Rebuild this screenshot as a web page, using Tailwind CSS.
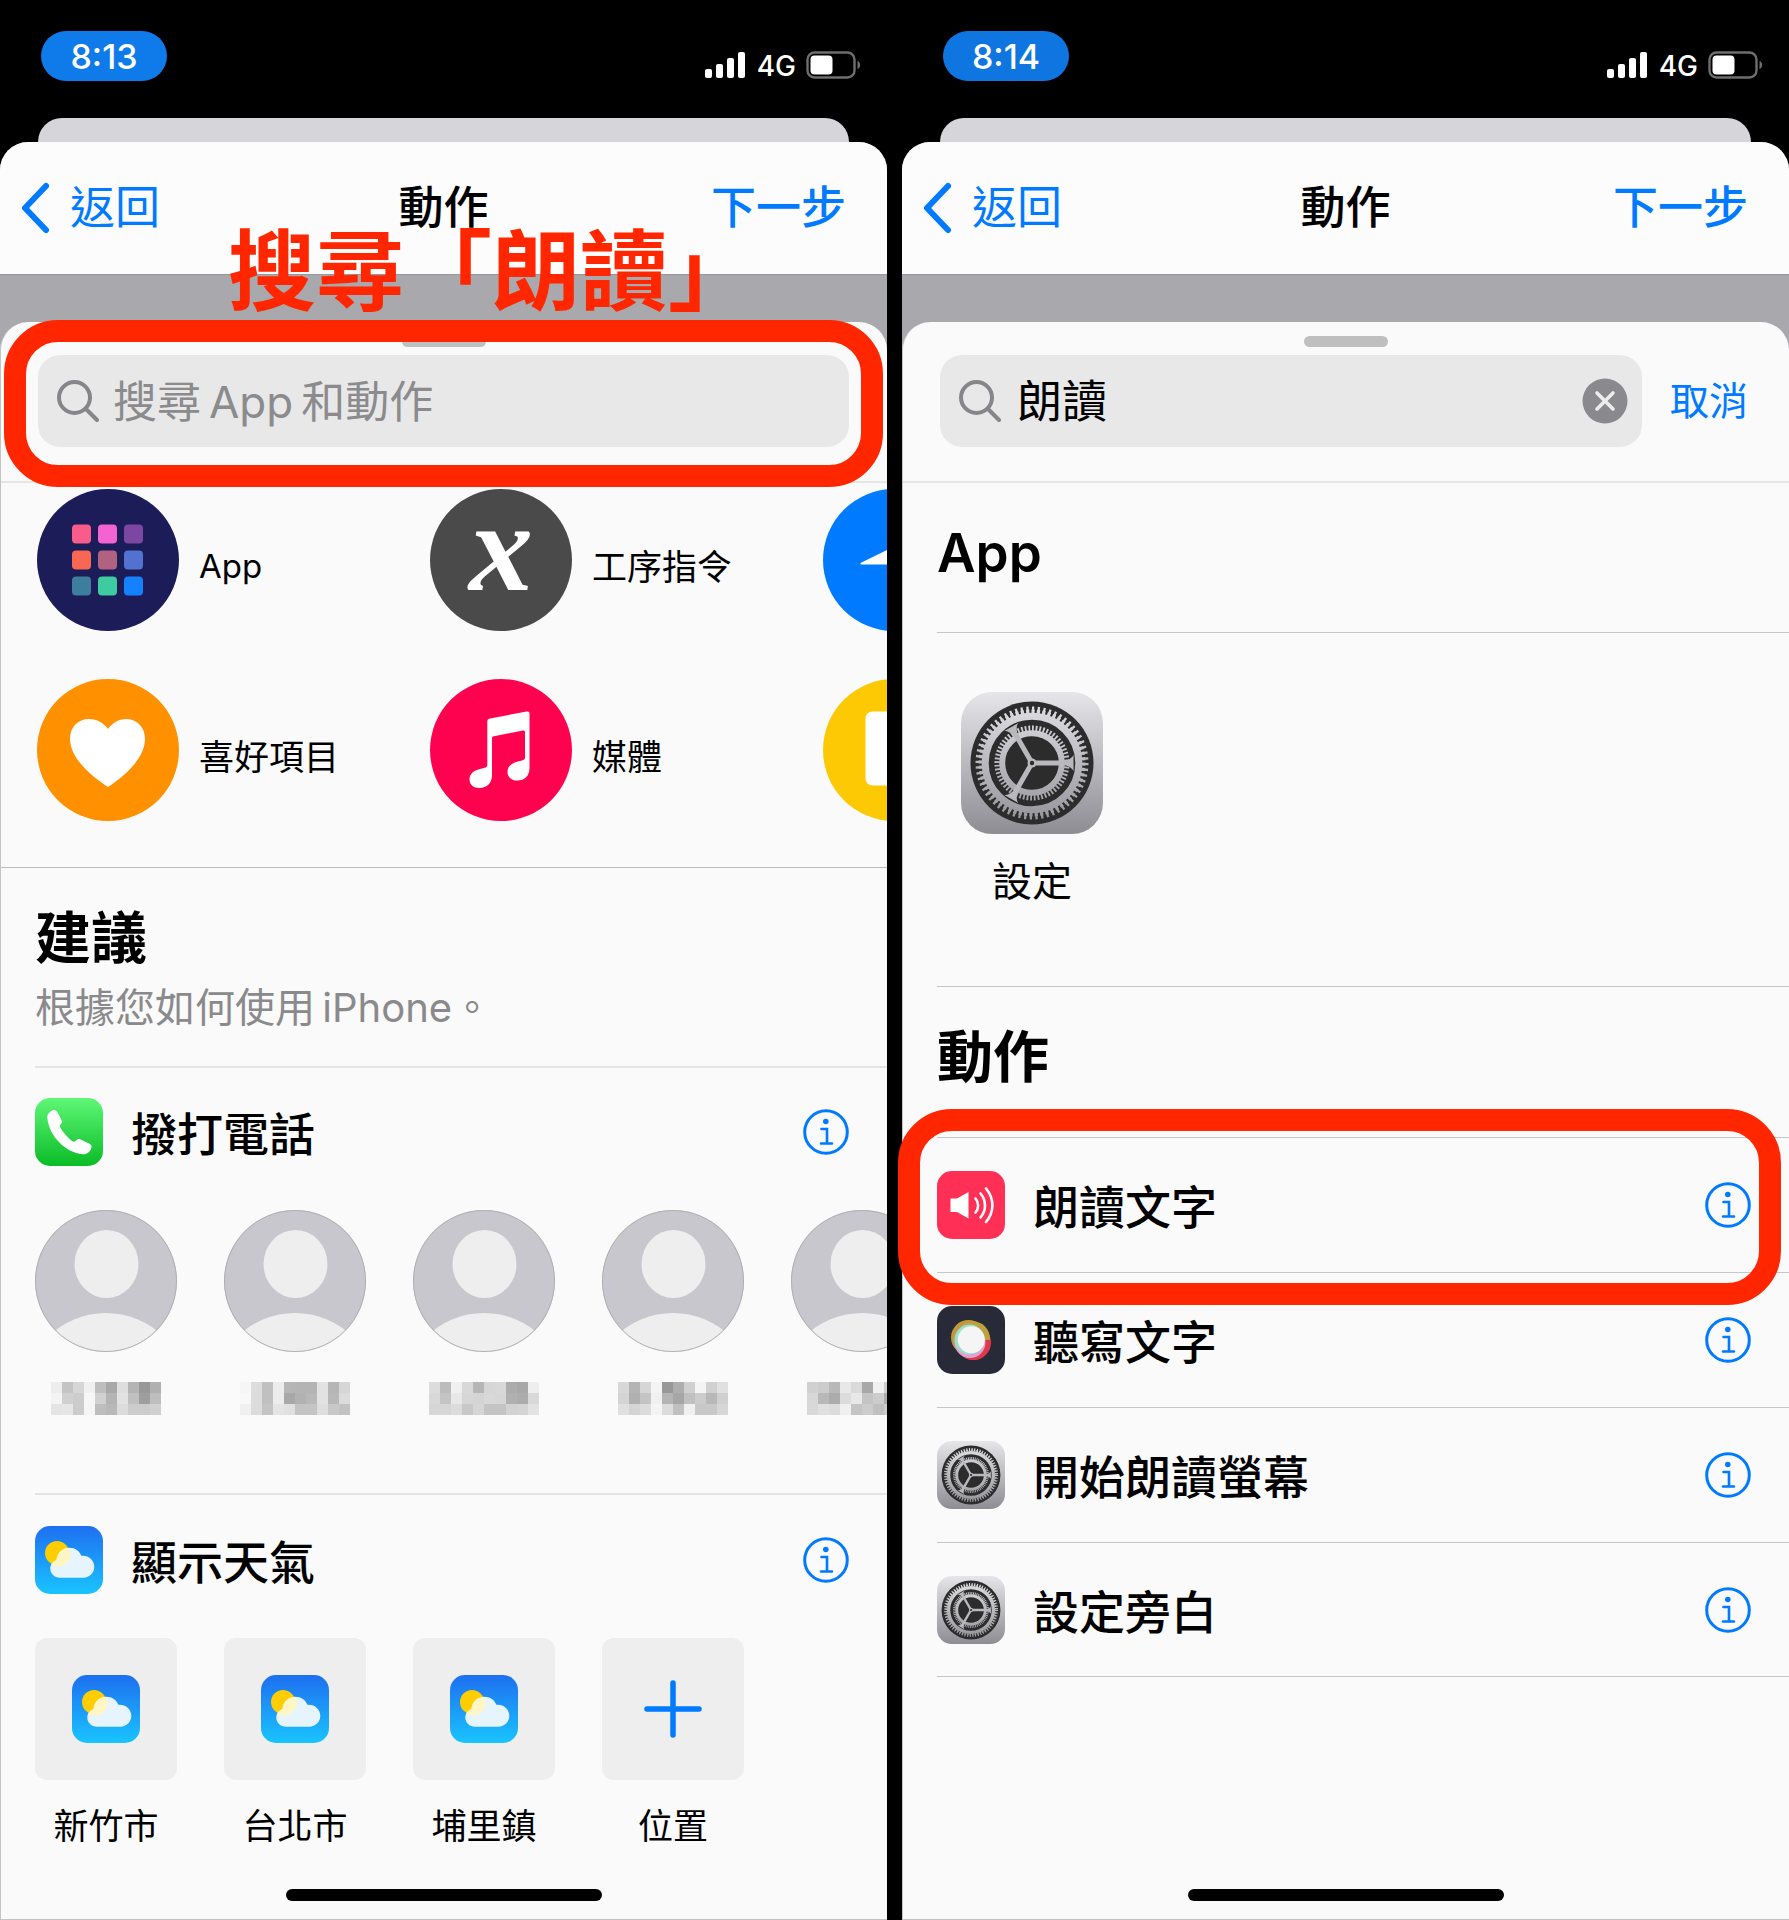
<!DOCTYPE html>
<html lang="zh-Hant">
<head>
    <meta charset="UTF-8">
    <meta name="viewport" content="width=device-width, initial-scale=1.0">
    <title>動作</title>
    <script src="https://cdn.jsdelivr.net/npm/@tailwindcss/browser@4"></script>
</head>
<body class="bg-black text-black font-['Inter','Noto_Sans_CJK_TC',sans-serif]">

    <!-- Icon sprite -->
    <svg class="absolute w-0 h-0" aria-hidden="true">
        <defs>
            <linearGradient id="steel" gradientUnits="userSpaceOnUse" x1="0" y1="0" x2="0" y2="142">
                <stop offset="0" stop-color="#e6e5ea"/>
                <stop offset="1" stop-color="#8e8d93"/>
            </linearGradient>
            <linearGradient id="green" x1="0" y1="0" x2="0" y2="1">
                <stop offset="0" stop-color="#5ff777"/>
                <stop offset="1" stop-color="#0abc26"/>
            </linearGradient>
            <linearGradient id="sky" x1="0" y1="0" x2="0" y2="1">
                <stop offset="0" stop-color="#1e6ff0"/>
                <stop offset="1" stop-color="#19c4ff"/>
            </linearGradient>
            <clipPath id="round"><circle cx="71" cy="71" r="71"/></clipPath>
            <clipPath id="sunClip"><circle cx="23" cy="28" r="12.500"/></clipPath>
        </defs>

        <symbol id="i-back" viewBox="0 0 30 52">
            <path d="M26 4 5 26l21 22" fill="none" stroke="#007aff" stroke-width="6" stroke-linecap="round" stroke-linejoin="round"/>
        </symbol>
        <symbol id="i-signal" viewBox="0 0 42 28">
            <g fill="#fff">
                <rect x="0" y="18" width="7" height="9" rx="2"/>
                <rect x="11" y="13" width="7" height="14" rx="2"/>
                <rect x="22" y="7" width="7" height="20" rx="2"/>
                <rect x="33" y="1" width="7" height="26" rx="2"/>
            </g>
        </symbol>
        <symbol id="i-battery" viewBox="0 0 55 28">
            <rect x="1.500" y="1.500" width="47" height="25" rx="7" fill="none" stroke="#6e6e6e" stroke-width="2.400"/>
            <rect x="4.500" y="4.500" width="22" height="19" rx="4" fill="#fff"/>
            <path d="M51.500 10c3.500 1 3.500 7 0 8z" fill="#6e6e6e"/>
        </symbol>
        <symbol id="i-search" viewBox="0 0 42 42">
            <g fill="none" stroke="#85858a" stroke-width="4" stroke-linecap="round">
                <circle cx="17.500" cy="17.500" r="15.500"/>
                <path d="m29 29 11 11"/>
            </g>
        </symbol>
        <symbol id="i-clear" viewBox="0 0 46 46">
            <circle cx="23" cy="23" r="22.500" fill="#8a8a8e"/>
            <path d="m15 15 16 16M31 15 15 31" stroke="#ececec" stroke-width="3.600" stroke-linecap="round"/>
        </symbol>
        <symbol id="i-info" viewBox="0 0 46 46">
            <circle cx="23" cy="23" r="21.300" fill="none" stroke="#007aff" stroke-width="3"/>
            <circle cx="22.800" cy="12.500" r="2.800" fill="#007aff"/>
            <path d="M18.500 20H24v14M18 34.500h11" fill="none" stroke="#007aff" stroke-width="2.600" stroke-linecap="round"/>
        </symbol>

        <symbol id="i-apps" viewBox="0 0 142 142">
            <circle cx="71" cy="71" r="71" fill="#1c1c58"/>
            <g>
                <rect x="35" y="35.500" width="19" height="19" rx="4" fill="#f75c8a"/>
                <rect x="61" y="35.500" width="19" height="19" rx="4" fill="#f364d2"/>
                <rect x="87" y="35.500" width="19" height="19" rx="4" fill="#7c47a2"/>
                <rect x="35" y="61.500" width="19" height="19" rx="4" fill="#f86654"/>
                <rect x="61" y="61.500" width="19" height="19" rx="4" fill="#b06280"/>
                <rect x="87" y="61.500" width="19" height="19" rx="4" fill="#5172d0"/>
                <rect x="35" y="87.500" width="19" height="19" rx="4" fill="#3d7d9e"/>
                <rect x="61" y="87.500" width="19" height="19" rx="4" fill="#3ecb9f"/>
                <rect x="87" y="87.500" width="19" height="19" rx="4" fill="#1482ff"/>
            </g>
        </symbol>
        <symbol id="i-heart" viewBox="0 0 142 142">
            <circle cx="71" cy="71" r="71" fill="#ff9000"/>
            <path d="M71 108C56 98 33 80 33 60c0-12 8-20 19-20 8 0 15 4 19 10 4-6 11-10 18-10 11 0 19 8 19 20 0 20-22 38-37 48z" fill="#fff"/>
        </symbol>
        <symbol id="i-music" viewBox="0 0 142 142">
            <circle cx="71" cy="71" r="71" fill="#ff024f"/>
            <path d="M57.300 43c0-2 .7-3 2.700-3.400L96.500 32.500c2-.4 3 .3 3 2V89c0 8-5 12.500-12 12.500-6 0-10-3.500-10-8.500 0-5.500 4-9 10.500-10.500 5-1.200 7-1.500 7-4V53.500c0-1.500-.7-2.200-2.200-1.900L64 57.200c-1.600.3-2 1-2 2.500V96c0 8-5 13-12.500 13-6 0-10-3.500-10-8.500 0-5.500 4-9 10.500-10.500 5.300-1.100 7.300-1.700 7.300-4z" fill="#fff"/>
        </symbol>
        <symbol id="i-location" viewBox="0 0 142 142">
            <circle cx="71" cy="71" r="71" fill="#007aff"/>
            <path d="M38.500 73.500 103 42c2-1 3 0 2 2L76 106c-1 2-3 2-3-.5V77c0-1-.5-1.500-1.500-1.500H38.500c-1.500 0-1.500-1.300 0-2z" fill="#fff"/>
        </symbol>
        <symbol id="i-doc" viewBox="0 0 142 142">
            <circle cx="71" cy="71" r="71" fill="#fdc804"/>
            <rect x="42.500" y="32.500" width="57" height="74" rx="7" fill="#fff"/>
        </symbol>
        <symbol id="i-person" viewBox="0 0 142 142">
            <circle cx="71" cy="71" r="71" fill="#c8c7cd"/>
            <ellipse cx="71.500" cy="54" rx="32" ry="34" fill="#eee"/>
            <circle cx="71" cy="185" r="82" fill="#eee" clip-path="url(#round)"/>
            <circle cx="71" cy="71" r="70.500" fill="none" stroke="#b1b1b4" stroke-width="1"/>
        </symbol>

        <symbol id="i-phone" viewBox="0 0 68 68">
            <rect width="68" height="68" rx="15" fill="url(#green)"/>
            <path d="M12.500 21c-1-4.500 2-7.300 5.500-8.700 2-.7 3.500.2 4.500 2.200l4 7.500c1 2 .5 3-1 4.500s-.5 3 1 5c3 4.500 6.500 8.500 10.500 11.500 2 1.300 3.300.5 4.500-1 1.200-1 2.300-1.200 4-.5l9 4.300c2 1 2.500 2.200 1.800 4.200-1.300 4-4.300 6.500-8.300 6.300C30 54.500 14.500 38 12.500 21z" fill="#fff"/>
        </symbol>
        <symbol id="i-weather" viewBox="0 0 68 68">
            <rect width="68" height="68" rx="15" fill="url(#sky)"/>
            <circle cx="22" cy="27" r="12" fill="#ffcd00"/>
            <path d="M25 51.700c-5.500 0-9.700-4-9.700-9.200 0-4 2.500-7 6.200-8.500C22 27 27.500 21.700 34.500 21.700c5.500 0 10 3 11.800 8C53.500 29 59.300 34 59.300 40.800c0 6.200-4.800 10.900-11 10.900z" fill="#e6f4fe"/>
            <path d="M25 51.700c-5.500 0-9.700-4-9.700-9.200 0-4 2.500-7 6.200-8.500C22 27 27.500 21.700 34.500 21.700c5.500 0 10 3 11.800 8C53.500 29 59.300 34 59.300 40.800c0 6.200-4.800 10.900-11 10.900z" fill="#fff6c4" clip-path="url(#sunClip)"/>
        </symbol>
        <symbol id="i-speak" viewBox="0 0 68 68">
            <rect width="68" height="68" rx="15" fill="#ff2f55"/>
            <path d="M13.500 27.500H20L31.500 21v26.500L20 41h-6.500z" fill="#fff"/>
            <g fill="none" stroke="#fff" stroke-width="2.600" stroke-linecap="round">
                <path d="M38.500 27.500c3.500 4 3.500 10 0 14"/>
                <path d="M43.500 22.500c6 7 6 17 0 24"/>
                <path d="M49 17.500c8.500 10 8.500 23.500 0 33.500"/>
            </g>
        </symbol>
        <symbol id="i-dictate" viewBox="0 0 68 68">
            <rect width="68" height="68" rx="15" fill="#292a37"/>
            <circle cx="36.500" cy="36.500" r="17.500" fill="#e0384b"/>
            <circle cx="31.500" cy="31.500" r="17.500" fill="#c2963c"/>
            <circle cx="36" cy="32.500" r="17" fill="#bfa03f"/>
            <path d="M53.500 34c1 10-6.500 20-17 20-6 0-11-3-14-7.500L40 34z" fill="#e0384b"/>
            <circle cx="33" cy="36.500" r="15.500" fill="#e0a2d4"/>
            <circle cx="32.500" cy="33.500" r="15" fill="#9be0cc"/>
            <circle cx="34.300" cy="33.800" r="13.500" fill="#f5f5f5"/>
        </symbol>
        <symbol id="i-gear" viewBox="0 0 142 142">
            <rect width="142" height="142" rx="31" fill="url(#steel)"/>
            <circle cx="71" cy="71" r="61.500" fill="#2c2c2d"/>
            <g fill="none" stroke="url(#steel)">
                <circle cx="71" cy="71" r="53.500" stroke-width="6" stroke-dasharray=".8 1.200" pathLength="120"/>
                <circle cx="71" cy="71" r="51.500" stroke-width="4" stroke-dasharray="1.200 .8" stroke-dashoffset=".2" pathLength="120"/>
                <circle cx="71" cy="71" r="46.800" stroke-width="7"/>
                <circle cx="71" cy="71" r="34.800" stroke-width="5.500" stroke-dasharray="1 1" pathLength="120"/>
                <circle cx="71" cy="71" r="29.800" stroke-width="6"/>
            </g>
            <g fill="#b9b8bd">
                <path id="spoke" d="M71 68.500h34c3-1 6-2.500 7.500-5.500v16c-1.500-3-4.500-4.500-7.500-5.500H71z"/>
                <use href="#spoke" transform="rotate(120 71 71)"/>
                <use href="#spoke" transform="rotate(240 71 71)"/>
                <circle cx="71" cy="71" r="4.500"/>
            </g>
            <circle cx="71" cy="71" r="2.200" fill="#2c2c2d"/>
        </symbol>
        <symbol id="i-plus" viewBox="0 0 58 58">
            <path d="M29 3v52M3 29h52" stroke="#007aff" stroke-width="5.500" stroke-linecap="round"/>
        </symbol>
    </svg>

    <main class="grid grid-cols-2 gap-[15px] min-h-screen">

        <!-- Phone 1: action picker -->
        <section class="relative flex flex-col min-w-0">
            <header class="flex justify-between h-[118px] pl-[41px] pr-[26px]">
                <div class="flex items-center justify-center mt-[31px] w-[126px] h-[50px] pt-px rounded-full bg-[#0f7aea] text-white text-[34px] font-medium">8:13</div>
                <div class="flex items-center gap-2.5 mt-[51px] h-7 text-white text-[28px] font-medium">
                    <svg class="w-[42px] h-7"><use href="#i-signal"/></svg>
                    <span class="pt-0.5">4G</span>
                    <svg class="w-[55px] h-7"><use href="#i-battery"/></svg>
                </div>
            </header>
            <div class="mx-[38px] h-6 rounded-t-[24px] bg-[#d6d6da]"></div>

            <div class="flex-1 flex flex-col rounded-t-[28px] bg-[#a8a8ad]">
                <nav class="grid grid-cols-3 items-center h-[133px] px-[41px] rounded-t-[28px] border-b border-[#98989c] bg-[#fcfcfd] text-[45px] text-[#007aff]">
                    <button class="flex items-center gap-5 -ml-[21px] justify-self-start"><svg class="w-[30px] h-[52px]"><use href="#i-back"/></svg>返回</button>
                    <h1 class="text-center text-black font-medium">動作</h1>
                    <button class="justify-self-end font-medium">下一步</button>
                </nav>

                <div class="flex-1 flex flex-col mt-[47px] rounded-t-[28px] border-l border-b border-[#c4c4c6] bg-[#fafafa] overflow-hidden">
                    <div class="self-center mt-3.5 w-[84px] h-[11px] rounded-full bg-[#bfbfc0]"></div>
                    <div class="pl-[37px] pr-[38px] pt-2 pb-[34px] border-b-2 border-[#e6e6e6]">
                        <label class="flex items-center gap-3.5 h-[92px] px-[19px] rounded-[22px] bg-[#e8e8e8]">
                            <svg class="shrink-0 w-[42px] h-[42px]"><use href="#i-search"/></svg>
                            <input type="search" aria-label="搜尋" placeholder="搜尋&thinsp;App&thinsp;和動作" class="flex-1 min-w-0 pt-0.5 bg-transparent text-[44px] outline-none placeholder:text-[#8b8b8e]">
                        </label>
                    </div>

                    <!-- Categories -->
                    <div class="grid grid-cols-[repeat(3,393px)] gap-y-12 pt-1.5 pb-[46px] pl-9 border-b border-[#bcbcbe] text-[35px]">
                        <a href="#" class="flex items-center gap-5"><svg class="w-[142px] h-[142px]"><use href="#i-apps"/></svg><span class="pt-3.5 text-[33px]">App</span></a>
                        <a href="#" class="flex items-center gap-5"><span class="flex justify-center w-[142px] h-[142px] rounded-full bg-[#4a4a4a] text-white text-[128px] leading-[116px] font-bold italic font-['Liberation_Serif',serif]">x</span><span class="pt-3.5">工序指令</span></a>
                        <a href="#" aria-label="位置"><svg class="w-[142px] h-[142px]"><use href="#i-location"/></svg></a>
                        <a href="#" class="flex items-center gap-5"><svg class="w-[142px] h-[142px]"><use href="#i-heart"/></svg><span class="pt-3.5">喜好項目</span></a>
                        <a href="#" class="flex items-center gap-5"><svg class="w-[142px] h-[142px]"><use href="#i-music"/></svg><span class="pt-3.5">媒體</span></a>
                        <a href="#" aria-label="文件"><svg class="w-[142px] h-[142px]"><use href="#i-doc"/></svg></a>
                    </div>

                    <!-- Suggestions -->
                    <div class="pl-[34px]">
                        <h2 class="pt-[37px] text-[56px] leading-[66px] font-bold">建議</h2>
                        <p class="pt-[11px] pb-8 text-[40px] leading-[52px] text-[#8a8a8c]">根據您如何使用&thinsp;iPhone。</p>

                        <div class="border-t-2 border-[#e4e4e5] pt-[30px] pb-[78px]">
                            <div class="flex items-center gap-7 pr-[38px]">
                                <svg class="w-[68px] h-[68px]"><use href="#i-phone"/></svg>
                                <h3 class="flex-1 pt-1 text-[46px] leading-[64px] font-medium">撥打電話</h3>
                                <button aria-label="資訊"><svg class="w-[46px] h-[46px]"><use href="#i-info"/></svg></button>
                            </div>
                            <div id="contacts" class="grid grid-cols-[repeat(5,142px)] gap-[47px] pt-11"></div>
                        </div>

                        <div class="border-t-2 border-[#e4e4e5] pt-[31px]">
                            <div class="flex items-center gap-7 pr-[38px]">
                                <svg class="w-[68px] h-[68px]"><use href="#i-weather"/></svg>
                                <h3 class="flex-1 pt-1 text-[46px] leading-[64px] font-medium">顯示天氣</h3>
                                <button aria-label="資訊"><svg class="w-[46px] h-[46px]"><use href="#i-info"/></svg></button>
                            </div>
                            <div class="grid grid-cols-[repeat(4,142px)] gap-[47px] pt-11 text-[35px] leading-[44px] text-center">
                                <button><span class="flex items-center justify-center h-[142px] mb-6 rounded-xl bg-[#eee]"><svg class="w-[68px] h-[68px]"><use href="#i-weather"/></svg></span>新竹市</button>
                                <button><span class="flex items-center justify-center h-[142px] mb-6 rounded-xl bg-[#eee]"><svg class="w-[68px] h-[68px]"><use href="#i-weather"/></svg></span>台北市</button>
                                <button><span class="flex items-center justify-center h-[142px] mb-6 rounded-xl bg-[#eee]"><svg class="w-[68px] h-[68px]"><use href="#i-weather"/></svg></span>埔里鎮</button>
                                <button><span class="flex items-center justify-center h-[142px] mb-6 rounded-xl bg-[#eee]"><svg class="w-[58px] h-[58px]"><use href="#i-plus"/></svg></span>位置</button>
                            </div>
                        </div>
                    </div>

                    <div class="self-center mt-auto mb-[18px] w-[316px] h-3 rounded-full bg-black"></div>
                </div>
            </div>

            <!-- Annotation -->
            <p class="absolute left-[228px] top-[219px] text-[88px] leading-[104px] font-bold whitespace-nowrap text-[#ff2600]">搜尋「朗讀」</p>
            <div class="absolute inset-x-1 top-[320px] h-[167px] rounded-[54px] border-[22px] border-[#ff2600]"></div>
        </section>

        <!-- Phone 2: search results -->
        <section class="relative flex flex-col min-w-0">
            <header class="flex justify-between h-[118px] pl-[41px] pr-[26px]">
                <div class="flex items-center justify-center mt-[31px] w-[126px] h-[50px] pt-px rounded-full bg-[#0f75e0] text-white text-[34px] font-medium">8:14</div>
                <div class="flex items-center gap-2.5 mt-[51px] h-7 text-white text-[28px] font-medium">
                    <svg class="w-[42px] h-7"><use href="#i-signal"/></svg>
                    <span class="pt-0.5">4G</span>
                    <svg class="w-[55px] h-7"><use href="#i-battery"/></svg>
                </div>
            </header>
            <div class="mx-[38px] h-6 rounded-t-[24px] bg-[#d6d6da]"></div>

            <div class="flex-1 flex flex-col rounded-t-[28px] bg-[#a8a8ad]">
                <nav class="grid grid-cols-3 items-center h-[133px] px-[41px] rounded-t-[28px] border-b border-[#98989c] bg-[#fcfcfd] text-[45px] text-[#007aff]">
                    <button class="flex items-center gap-5 -ml-[21px] justify-self-start"><svg class="w-[30px] h-[52px]"><use href="#i-back"/></svg>返回</button>
                    <h1 class="text-center text-black font-medium">動作</h1>
                    <button class="justify-self-end font-medium">下一步</button>
                </nav>

                <div class="flex-1 flex flex-col mt-[47px] rounded-t-[28px] border-l border-b border-[#c4c4c6] bg-[#fafafa] overflow-hidden">
                    <div class="self-center mt-3.5 w-[84px] h-[11px] rounded-full bg-[#bfbfc0]"></div>
                    <div class="flex items-center gap-7 pl-[37px] pr-[41px] pt-2 pb-[34px] border-b-2 border-[#e6e6e6]">
                        <label class="flex-1 min-w-0 flex items-center gap-4 h-[92px] pl-[19px] pr-3.5 rounded-[22px] bg-[#e8e8e8]">
                            <svg class="shrink-0 w-[42px] h-[42px]"><use href="#i-search"/></svg>
                            <input type="text" aria-label="搜尋" value="朗讀" class="flex-1 min-w-0 pt-0.5 bg-transparent text-[45px] outline-none">
                            <button class="shrink-0" aria-label="清除"><svg class="w-[46px] h-[46px]"><use href="#i-clear"/></svg></button>
                        </label>
                        <button class="shrink-0 whitespace-nowrap text-[39px] text-[#007aff]">取消</button>
                    </div>

                    <div class="pl-[34px]">
                        <h2 class="pt-[37px] pb-[46px] text-[53px] leading-[66px] font-semibold">App</h2>
                        <div class="border-y border-[#c6c6c8] pt-[59px] pb-20 pl-6">
                            <button class="block w-[142px] text-center text-[40px] leading-[48px]">
                                <svg class="w-[142px] h-[142px] mb-6"><use href="#i-gear"/></svg>設定
                            </button>
                        </div>

                        <h2 class="pt-[37px] pb-[47px] text-[56px] leading-[66px] font-bold">動作</h2>
                        <ul class="text-[46px] leading-[64px] font-medium">
                            <li class="flex items-center gap-7 h-[135px] pr-[38px] border-t border-[#c6c6c8]">
                                <svg class="w-[68px] h-[68px]"><use href="#i-speak"/></svg>
                                <span class="flex-1 pt-1">朗讀文字</span>
                                <button aria-label="資訊"><svg class="w-[46px] h-[46px]"><use href="#i-info"/></svg></button>
                            </li>
                            <li class="flex items-center gap-7 h-[135px] pr-[38px] border-t border-[#c6c6c8]">
                                <svg class="w-[68px] h-[68px]"><use href="#i-dictate"/></svg>
                                <span class="flex-1 pt-1">聽寫文字</span>
                                <button aria-label="資訊"><svg class="w-[46px] h-[46px]"><use href="#i-info"/></svg></button>
                            </li>
                            <li class="flex items-center gap-7 h-[135px] pr-[38px] border-t border-[#c6c6c8]">
                                <svg class="w-[68px] h-[68px]"><use href="#i-gear"/></svg>
                                <span class="flex-1 pt-1">開始朗讀螢幕</span>
                                <button aria-label="資訊"><svg class="w-[46px] h-[46px]"><use href="#i-info"/></svg></button>
                            </li>
                            <li class="flex items-center gap-7 h-[135px] pr-[38px] border-y border-[#c6c6c8]">
                                <svg class="w-[68px] h-[68px]"><use href="#i-gear"/></svg>
                                <span class="flex-1 pt-1">設定旁白</span>
                                <button aria-label="資訊"><svg class="w-[46px] h-[46px]"><use href="#i-info"/></svg></button>
                            </li>
                        </ul>
                    </div>

                    <div class="self-center mt-auto mb-[18px] w-[316px] h-3 rounded-full bg-black"></div>
                </div>
            </div>

            <!-- Annotation -->
            <div class="absolute -left-1 right-2 top-[1109px] h-[196px] rounded-[54px] border-[22px] border-[#ff2600]"></div>
        </section>
    </main>

    <script>
        // Contact names are pixelated: one grey level (hex) per cell, 10 x 3
        const contacts = [
            ['edc4d6f0bea8deb498b0', 'f4d0ccf6d0b4e2c09ebe', 'e4e6ccf6beb8dcccccd0'],
            ['f6dcc0ecb6b4b4e2b6d6', 'f8dcc0eca8b2b8e2b8dc', 'f0dcc4e4e0c4c4dec8c2'],
            ['dcbcf0d8b6d6d8aca8ee', 'd8c4e8d6d4d8d6b0acd8', 'd6d6dcc8d6c4c4d2d4e2'],
            ['d8b4d6f498aed0f4d0e0', 'd4b0c4f0b4a6c0ccb8d0', 'e0d4dcf4dcc0f0c8c8d6'],
            ['d0ccb8e8daa8f0ccb0d8', 'd8b8acdce8c4ccaca8c0', 'd8e0dcf0c4ccc0ccd0d4'],
        ];

        document.getElementById('contacts').innerHTML = contacts.map(rows => {
            const cells = rows.map(row => row.match(/../g).map(v => `<i style="background:#${v}${v}${v}"></i>`).join('')).join('');
            return `<button aria-label="聯絡人">
                <svg class="w-[142px] h-[142px]"><use href="#i-person"/></svg>
                <span class="grid grid-cols-[repeat(10,11px)] auto-rows-[11px] justify-center mt-[30px]">${cells}</span>
            </button>`;
        }).join('');
    </script>
</body>
</html>
